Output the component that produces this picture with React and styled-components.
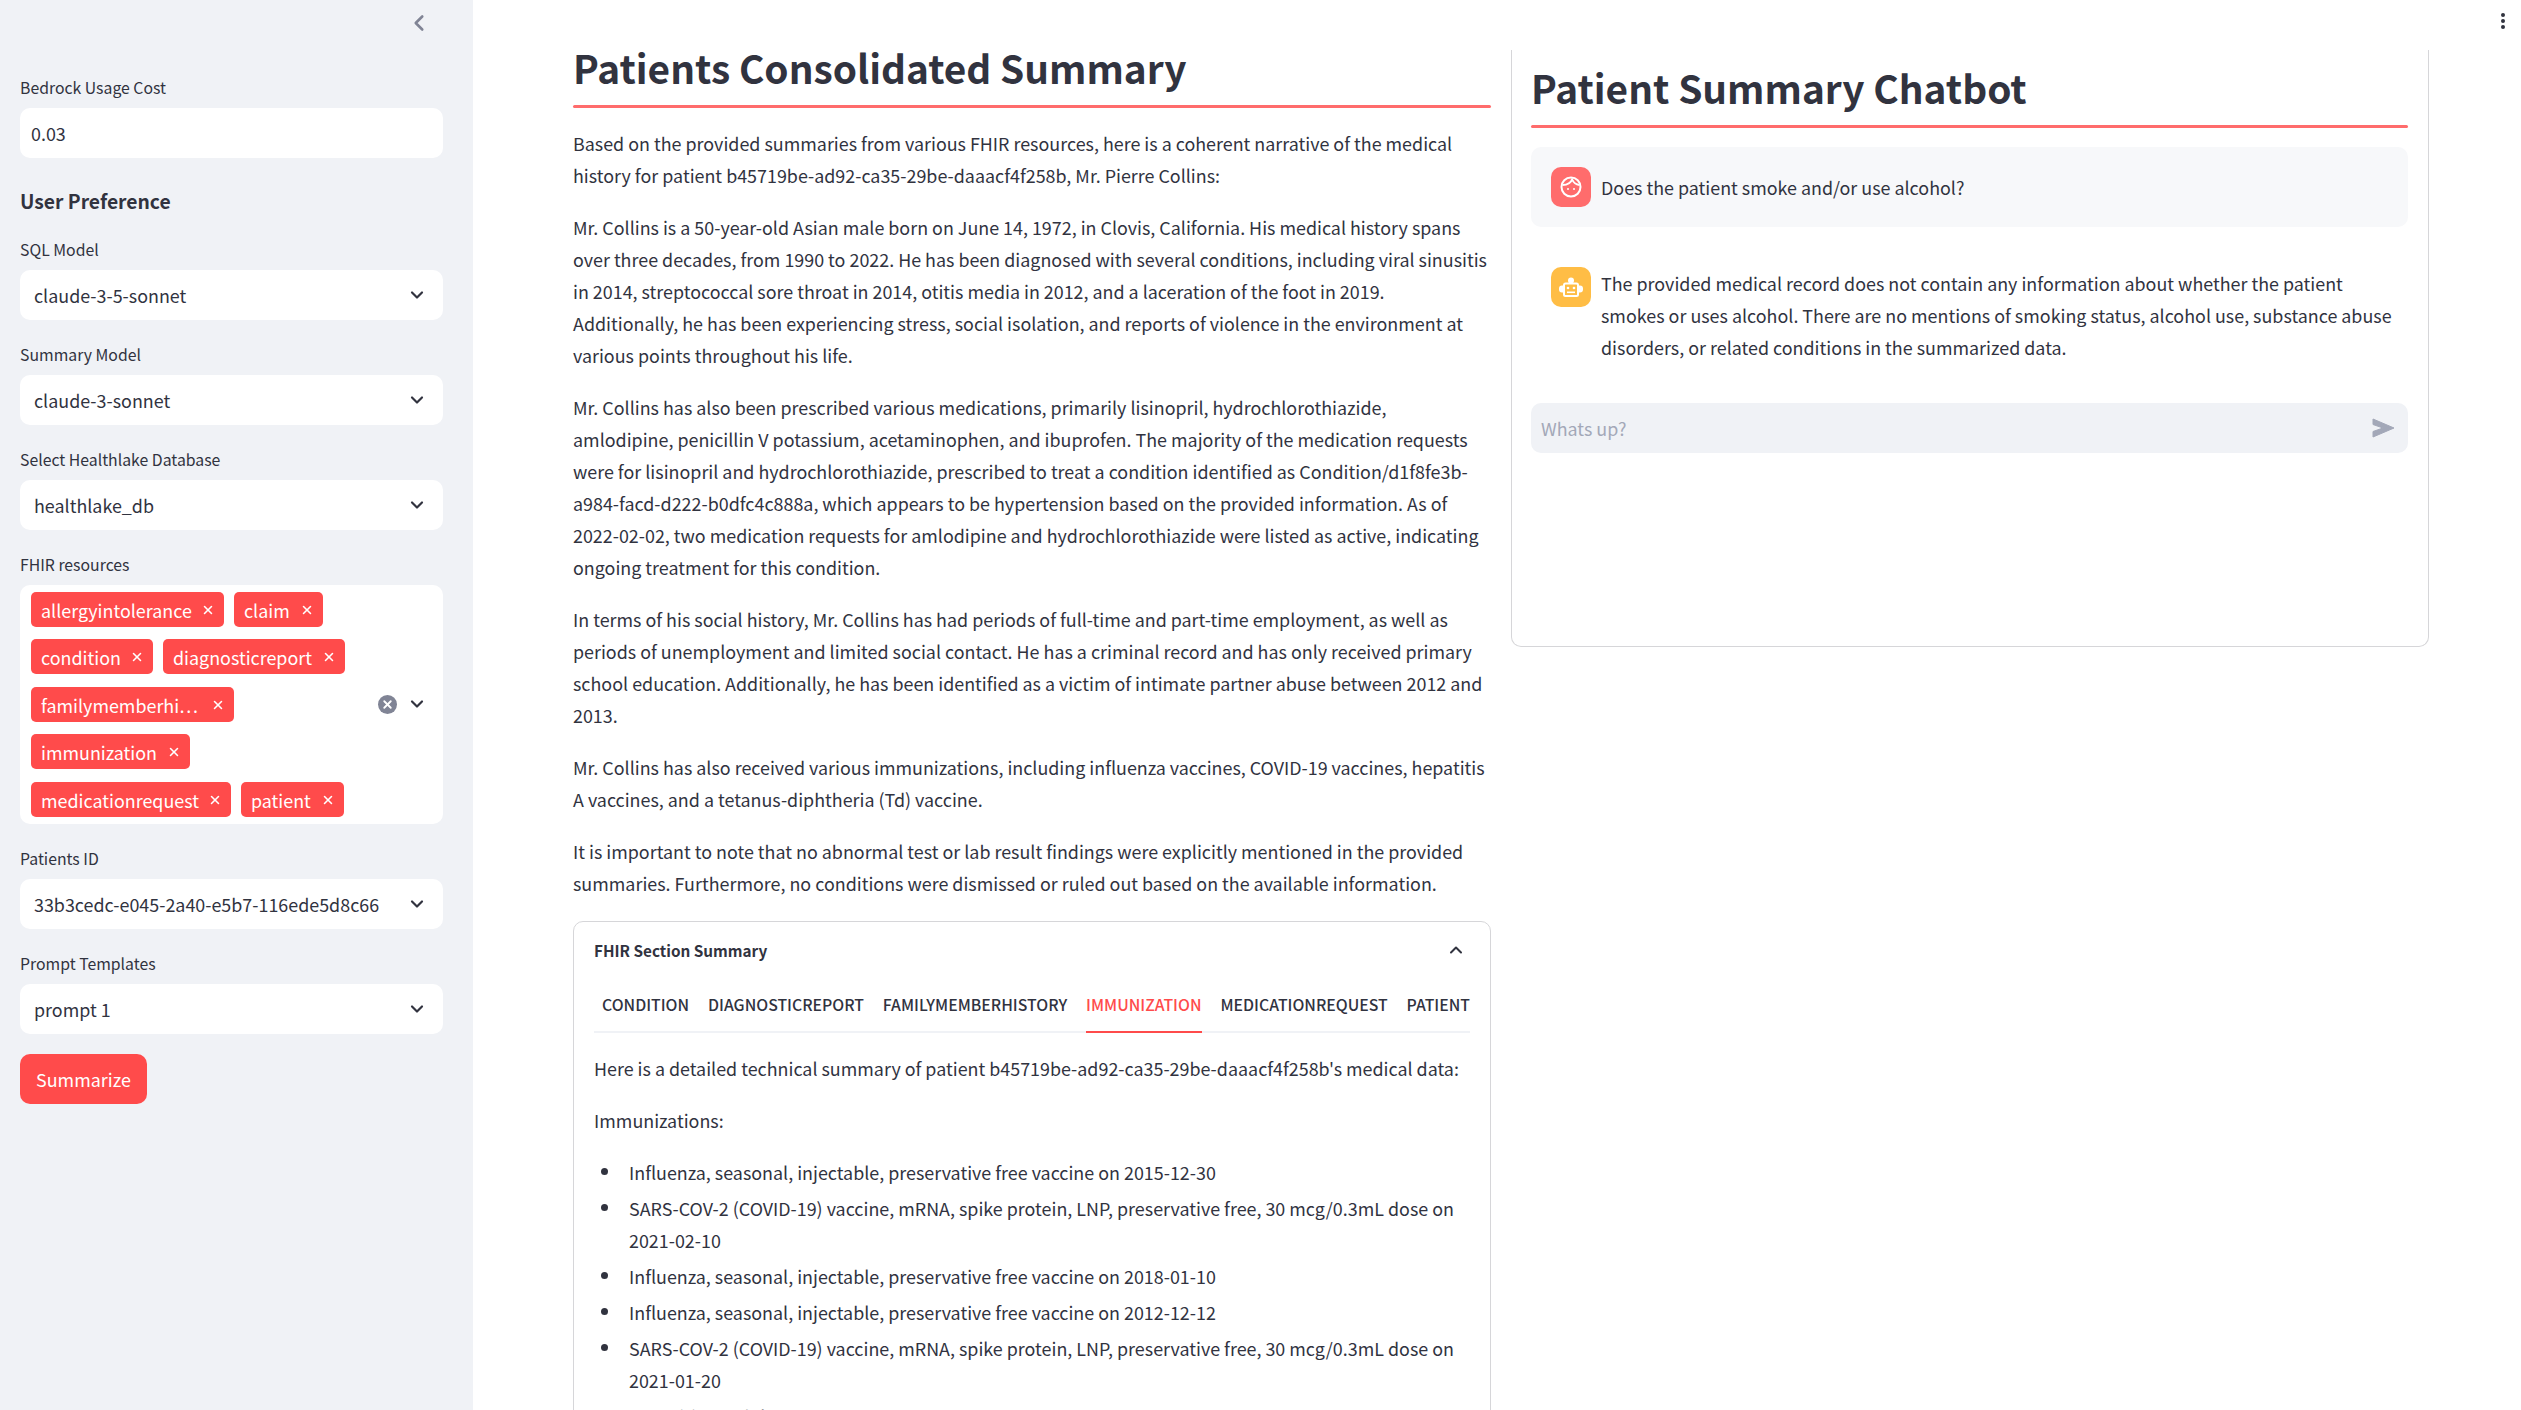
import React from "react";
import styled, { createGlobalStyle } from "styled-components";
import { ChevronDown, ChevronLeft, ChevronUp, X } from "lucide-react";

const Global = createGlobalStyle`
  html, body {
    margin: 0;
    height: 100%;
    overflow: hidden;
    background: #fff;
  }
  * { box-sizing: border-box; }
  body {
    font-family: "Noto Sans CJK SC", "Noto Sans", sans-serif;
    color: #31333f;
  }
`;

const Page = styled.div`
  display: flex;
  width: 2521px;
  height: 1410px;
  overflow: hidden;
  position: relative;
`;

const Sidebar = styled.aside`
  width: 473px;
  flex: none;
  background: #f0f2f6;
  padding: 75px 30px 0 20px;
  position: relative;
`;

const Collapse = styled.button`
  position: absolute;
  top: 10px;
  right: 41px;
  border: 0;
  padding: 0;
  background: none;
  color: #808495;
  display: flex;
`;

const Field = styled.div`
  margin-bottom: ${p => p.gap || 22}px;
`;

const Label = styled.div`
  font-size: 15.8px;
  line-height: 25px;
  height: 25px;
  margin-bottom: 8px;
`;

const Input = styled.div`
  height: 50px;
  border-radius: 10px;
  background: #fff;
  display: flex;
  align-items: center;
  padding: 0 11px;
  font-size: 17.9px;
`;

const SelectBox = styled.div`
  height: 50px;
  border-radius: 10px;
  background: #fff;
  display: flex;
  align-items: center;
  justify-content: space-between;
  padding: 0 16px 0 14px;
  font-size: 17.9px;
  white-space: nowrap;
`;

const SideHeading = styled.h3`
  margin: 0 0 18px;
  font-size: 19.3px;
  line-height: 36px;
  font-weight: 600;
`;

const MultiBox = styled.div`
  height: 239px;
  border-radius: 10px;
  background: #fff;
  position: relative;
  padding: 7px 11px;
`;

const TagRow = styled.div`
  display: flex;
  gap: 10px;
  margin-bottom: ${p => p.mb}px;
`;

const Tag = styled.span`
  height: 35px;
  width: ${p => p.w}px;
  padding: 0 9px 0 10px;
  border-radius: 5px;
  background: #ff4b4b;
  color: #fff;
  font-size: 17.9px;
  display: flex;
  align-items: center;
  justify-content: space-between;
  white-space: nowrap;
`;

const MultiControls = styled.div`
  position: absolute;
  right: 16px;
  top: 109px;
  display: flex;
  align-items: center;
  gap: 10px;
`;

const ClearDot = styled.span`
  width: 19px;
  height: 19px;
  border-radius: 50%;
  background: #808495;
  color: #fff;
  display: flex;
  align-items: center;
  justify-content: center;
`;

const PrimaryButton = styled.button`
  height: 50px;
  width: 127px;
  border: 0;
  border-radius: 10px;
  background: #ff4b4b;
  color: #fff;
  font: inherit;
  font-size: 17.9px;
  padding: 0;
`;

const Main = styled.main`
  flex: 1;
  display: grid;
  grid-template-columns: 918px 918px;
  column-gap: 20px;
  padding: 0 0 0 100px;
  align-items: start;
`;

const Column = styled.section`
  padding-top: 34.5px;
`;

const PageTitle = styled.h1`
  margin: 0;
  font-size: 38.8px;
  line-height: 64px;
  font-weight: 600;
`;

const Rule = styled.div`
  height: 3px;
  background: #ff6c6c;
  border-radius: 2px;
  margin: 6.5px 0 19px;
`;

const Para = styled.p`
  margin: 0 0 20px;
  font-size: 17.9px;
  line-height: 32px;
`;

const Expander = styled.div`
  border: 1px solid #d6d6d9;
  border-radius: 10px;
  padding: 0 20px;
  margin-top: 21.5px;
`;

const ExpanderHead = styled.div`
  height: 59px;
  display: flex;
  align-items: center;
  justify-content: space-between;
  font-size: 15.3px;
  font-weight: 600;
  padding: 0 4px 3px 0;
`;

const Tabs = styled.div`
  display: flex;
  justify-content: space-between;
  height: 52px;
  border-bottom: 2px solid #f0f2f6;
  padding: 0 0 0 8px;
  margin-bottom: 19px;
`;

const Tab = styled.div`
  height: 52px;
  padding-top: 12px;
  font-size: 15.8px;
  line-height: 24px;
  font-weight: 500;
  color: ${p => (p.active ? "#ff4b4b" : "#31333f")};
  border-bottom: 2px solid ${p => (p.active ? "#ff4b4b" : "transparent")};
`;

const List = styled.ul`
  margin: 0;
  padding: 0;
  list-style: none;
  font-size: 17.9px;
  line-height: 32px;
`;

const Item = styled.li`
  display: flex;
  margin-bottom: 4px;

  &::before {
    content: "";
    flex: none;
    width: 7px;
    height: 7px;
    margin: 12px 21px 0 7px;
    border-radius: 50%;
    background: #31333f;
  }
`;

const ChatCard = styled.section`
  margin-top: 50px;
  height: 597px;
  border: 1px solid #d6d6d9;
  border-top: 0;
  border-radius: 0 0 10px 10px;
  padding: 0 20px 0 19px;
`;

const ChatTitle = styled(PageTitle)`
  padding-top: 4.5px;
`;

const ChatRow = styled.div`
  display: flex;
  gap: 10px;
  padding: 20px 16px 20px 20px;
  border-radius: 10px;
  background: ${p => (p.user ? "#f7f8fa" : "#fff")};
  font-size: 17.9px;
  line-height: 32px;
  margin-bottom: ${p => p.mb}px;
`;

const Avatar = styled.div`
  width: 40px;
  height: 40px;
  flex: none;
  border-radius: 10px;
  background: ${p => p.color};
  display: flex;
  align-items: center;
  justify-content: center;
`;

const ChatText = styled.div`
  flex: 1;
  padding-top: ${p => (p.single ? 4 : 0)}px;
`;

const ChatInput = styled.div`
  height: 50px;
  border-radius: 10px;
  background: #f0f2f6;
  display: flex;
  align-items: center;
  justify-content: space-between;
  padding: 0 13px 0 10px;
  font-size: 17.9px;
  color: #a3a8b8;
`;

const MenuButton = styled.div`
  position: absolute;
  top: 13px;
  right: 16px;
  display: flex;
  flex-direction: column;
  gap: 2px;

  span {
    width: 4px;
    height: 4px;
    border-radius: 50%;
    background: #31333f;
  }
`;

const Select = ({ label, value, gap }) => (
  <Field gap={gap}>
    <Label>{label}</Label>
    <SelectBox>
      {value}
      <ChevronDown size={20} strokeWidth={2.6} color="#31333f" />
    </SelectBox>
  </Field>
);

const Chip = ({ w, children }) => (
  <Tag w={w}>
    {children}
    <X size={14} strokeWidth={2.6} />
  </Tag>
);

const UserFace = () => (
  <svg width="26" height="26" viewBox="0 0 26 26" fill="none" stroke="#fff" strokeWidth="2">
    <circle cx="13" cy="13" r="9.5" />
    <path d="M4.5 11c4.5 0 8.5-2 10-6.5M14.5 6c1 2.5 3.5 4.5 7 5" />
    <circle cx="10" cy="15" r="1" fill="#fff" stroke="none" />
    <circle cx="16" cy="15" r="1" fill="#fff" stroke="none" />
  </svg>
);

const BotFace = () => (
  <svg width="26" height="26" viewBox="0 0 26 26" fill="#fff">
    <circle cx="13" cy="6.5" r="3" />
    <rect x="6" y="9.5" width="14" height="12.5" rx="1.5" fill="#ffbd45" stroke="#fff" strokeWidth="2" />
    <path d="M5 11.5H4a3 3 0 0 0-3 3v1a3 3 0 0 0 3 3h1zM21 11.5h1a3 3 0 0 1 3 3v1a3 3 0 0 1-3 3h-1z" />
    <circle cx="10" cy="14" r="1.3" />
    <circle cx="16" cy="14" r="1.3" />
    <rect x="9" y="17.5" width="8" height="1.6" />
  </svg>
);

const SendIcon = () => (
  <svg width="23" height="20" viewBox="0 0 23 20" fill="#a3a8b8">
    <path d="M1 1l21 9-21 9v-5.5L11 10 1 6.5z" stroke="#a3a8b8" strokeLinejoin="round" strokeWidth="1" />
  </svg>
);

const tabs = ["CONDITION", "DIAGNOSTICREPORT", "FAMILYMEMBERHISTORY", "IMMUNIZATION", "MEDICATIONREQUEST", "PATIENT"];

export default function App() {
  return (
    <Page>
      <Global />
      <Sidebar>
        <Collapse>
          <ChevronLeft size={26} strokeWidth={2.4} />
        </Collapse>
        <Field gap={25}>
          <Label>Bedrock Usage Cost</Label>
          <Input>0.03</Input>
        </Field>
        <SideHeading>User Preference</SideHeading>
        <Select label="SQL Model" value="claude-3-5-sonnet" />
        <Select label="Summary Model" value="claude-3-sonnet" />
        <Select label="Select Healthlake Database" value="healthlake_db" />
        <Field>
          <Label>FHIR resources</Label>
          <MultiBox>
            <TagRow mb={12}>
              <Chip w={193}>allergyintolerance</Chip>
              <Chip w={89}>claim</Chip>
            </TagRow>
            <TagRow mb={13}>
              <Chip w={122}>condition</Chip>
              <Chip w={182}>diagnosticreport</Chip>
            </TagRow>
            <TagRow mb={12}>
              <Chip w={203}>familymemberhi…</Chip>
            </TagRow>
            <TagRow mb={13}>
              <Chip w={159}>immunization</Chip>
            </TagRow>
            <TagRow mb={0}>
              <Chip w={200}>medicationrequest</Chip>
              <Chip w={103}>patient</Chip>
            </TagRow>
            <MultiControls>
              <ClearDot>
                <X size={13} strokeWidth={3.4} />
              </ClearDot>
              <ChevronDown size={20} strokeWidth={2.6} color="#31333f" />
            </MultiControls>
          </MultiBox>
        </Field>
        <Select label="Patients ID" value="33b3cedc-e045-2a40-e5b7-116ede5d8c66" />
        <Select label="Prompt Templates" value="prompt 1" gap={20} />
        <PrimaryButton>Summarize</PrimaryButton>
      </Sidebar>

      <Main>
        <Column>
          <PageTitle>Patients Consolidated Summary</PageTitle>
          <Rule />
          <Para>
            Based on the provided summaries from various FHIR resources, here is a coherent narrative of the medical
            history for patient b45719be-ad92-ca35-29be-daaacf4f258b, Mr. Pierre Collins:
          </Para>
          <Para>
            Mr. Collins is a 50-year-old Asian male born on June 14, 1972, in Clovis, California. His medical history
            spans over three decades, from 1990 to 2022. He has been diagnosed with several conditions, including viral
            sinusitis in 2014, streptococcal sore throat in 2014, otitis media in 2012, and a laceration of the foot in
            2019. Additionally, he has been experiencing stress, social isolation, and reports of violence in the
            environment at various points throughout his life.
          </Para>
          <Para>
            Mr. Collins has also been prescribed various medications, primarily lisinopril, hydrochlorothiazide,
            <br />
            amlodipine, penicillin V potassium, acetaminophen, and ibuprofen. The majority of the medication requests
            were for lisinopril and hydrochlorothiazide, prescribed to treat a condition identified as
            Condition/d1f8fe3b-a984-facd-d222-b0dfc4c888a, which appears to be hypertension based on the provided
            information. As of 2022-02-02, two medication requests for amlodipine and hydrochlorothiazide were listed
            as active, indicating ongoing treatment for this condition.
          </Para>
          <Para>
            In terms of his social history, Mr. Collins has had periods of full-time and part-time employment, as well
            as periods of unemployment and limited social contact. He has a criminal record and has only received
            primary school education. Additionally, he has been identified as a victim of intimate partner abuse
            between 2012 and 2013.
          </Para>
          <Para>
            Mr. Collins has also received various immunizations, including influenza vaccines, COVID-19 vaccines,
            hepatitis A vaccines, and a tetanus-diphtheria (Td) vaccine.
          </Para>
          <Para>
            It is important to note that no abnormal test or lab result findings were explicitly mentioned in the
            provided summaries. Furthermore, no conditions were dismissed or ruled out based on the available
            information.
          </Para>
          <Expander>
            <ExpanderHead>
              FHIR Section Summary
              <ChevronUp size={20} strokeWidth={2.4} />
            </ExpanderHead>
            <Tabs>
              {tabs.map(t => (
                <Tab key={t} active={t === "IMMUNIZATION"}>
                  {t}
                </Tab>
              ))}
            </Tabs>
            <Para>Here is a detailed technical summary of patient b45719be-ad92-ca35-29be-daaacf4f258b's medical data:</Para>
            <Para>Immunizations:</Para>
            <List>
              <Item>Influenza, seasonal, injectable, preservative free vaccine on 2015-12-30</Item>
              <Item>SARS-COV-2 (COVID-19) vaccine, mRNA, spike protein, LNP, preservative free, 30 mcg/0.3mL dose on 2021-02-10</Item>
              <Item>Influenza, seasonal, injectable, preservative free vaccine on 2018-01-10</Item>
              <Item>Influenza, seasonal, injectable, preservative free vaccine on 2012-12-12</Item>
              <Item>SARS-COV-2 (COVID-19) vaccine, mRNA, spike protein, LNP, preservative free, 30 mcg/0.3mL dose on 2021-01-20</Item>
              <Item>Hepatitis A, adult</Item>
            </List>
          </Expander>
        </Column>

        <ChatCard>
          <ChatTitle>Patient Summary Chatbot</ChatTitle>
          <Rule />
          <ChatRow user mb={20}>
            <Avatar color="#ff6c6c">
              <UserFace />
            </Avatar>
            <ChatText single>Does the patient smoke and/or use alcohol?</ChatText>
          </ChatRow>
          <ChatRow mb={20}>
            <Avatar color="#ffbd45">
              <BotFace />
            </Avatar>
            <ChatText>
              The provided medical record does not contain any information about whether the patient smokes or uses
              alcohol. There are no mentions of smoking status, alcohol use, substance abuse disorders, or related
              conditions in the summarized data.
            </ChatText>
          </ChatRow>
          <ChatInput>
            Whats up?
            <SendIcon />
          </ChatInput>
        </ChatCard>
      </Main>

      <MenuButton>
        <span />
        <span />
        <span />
      </MenuButton>
    </Page>
  );
}
